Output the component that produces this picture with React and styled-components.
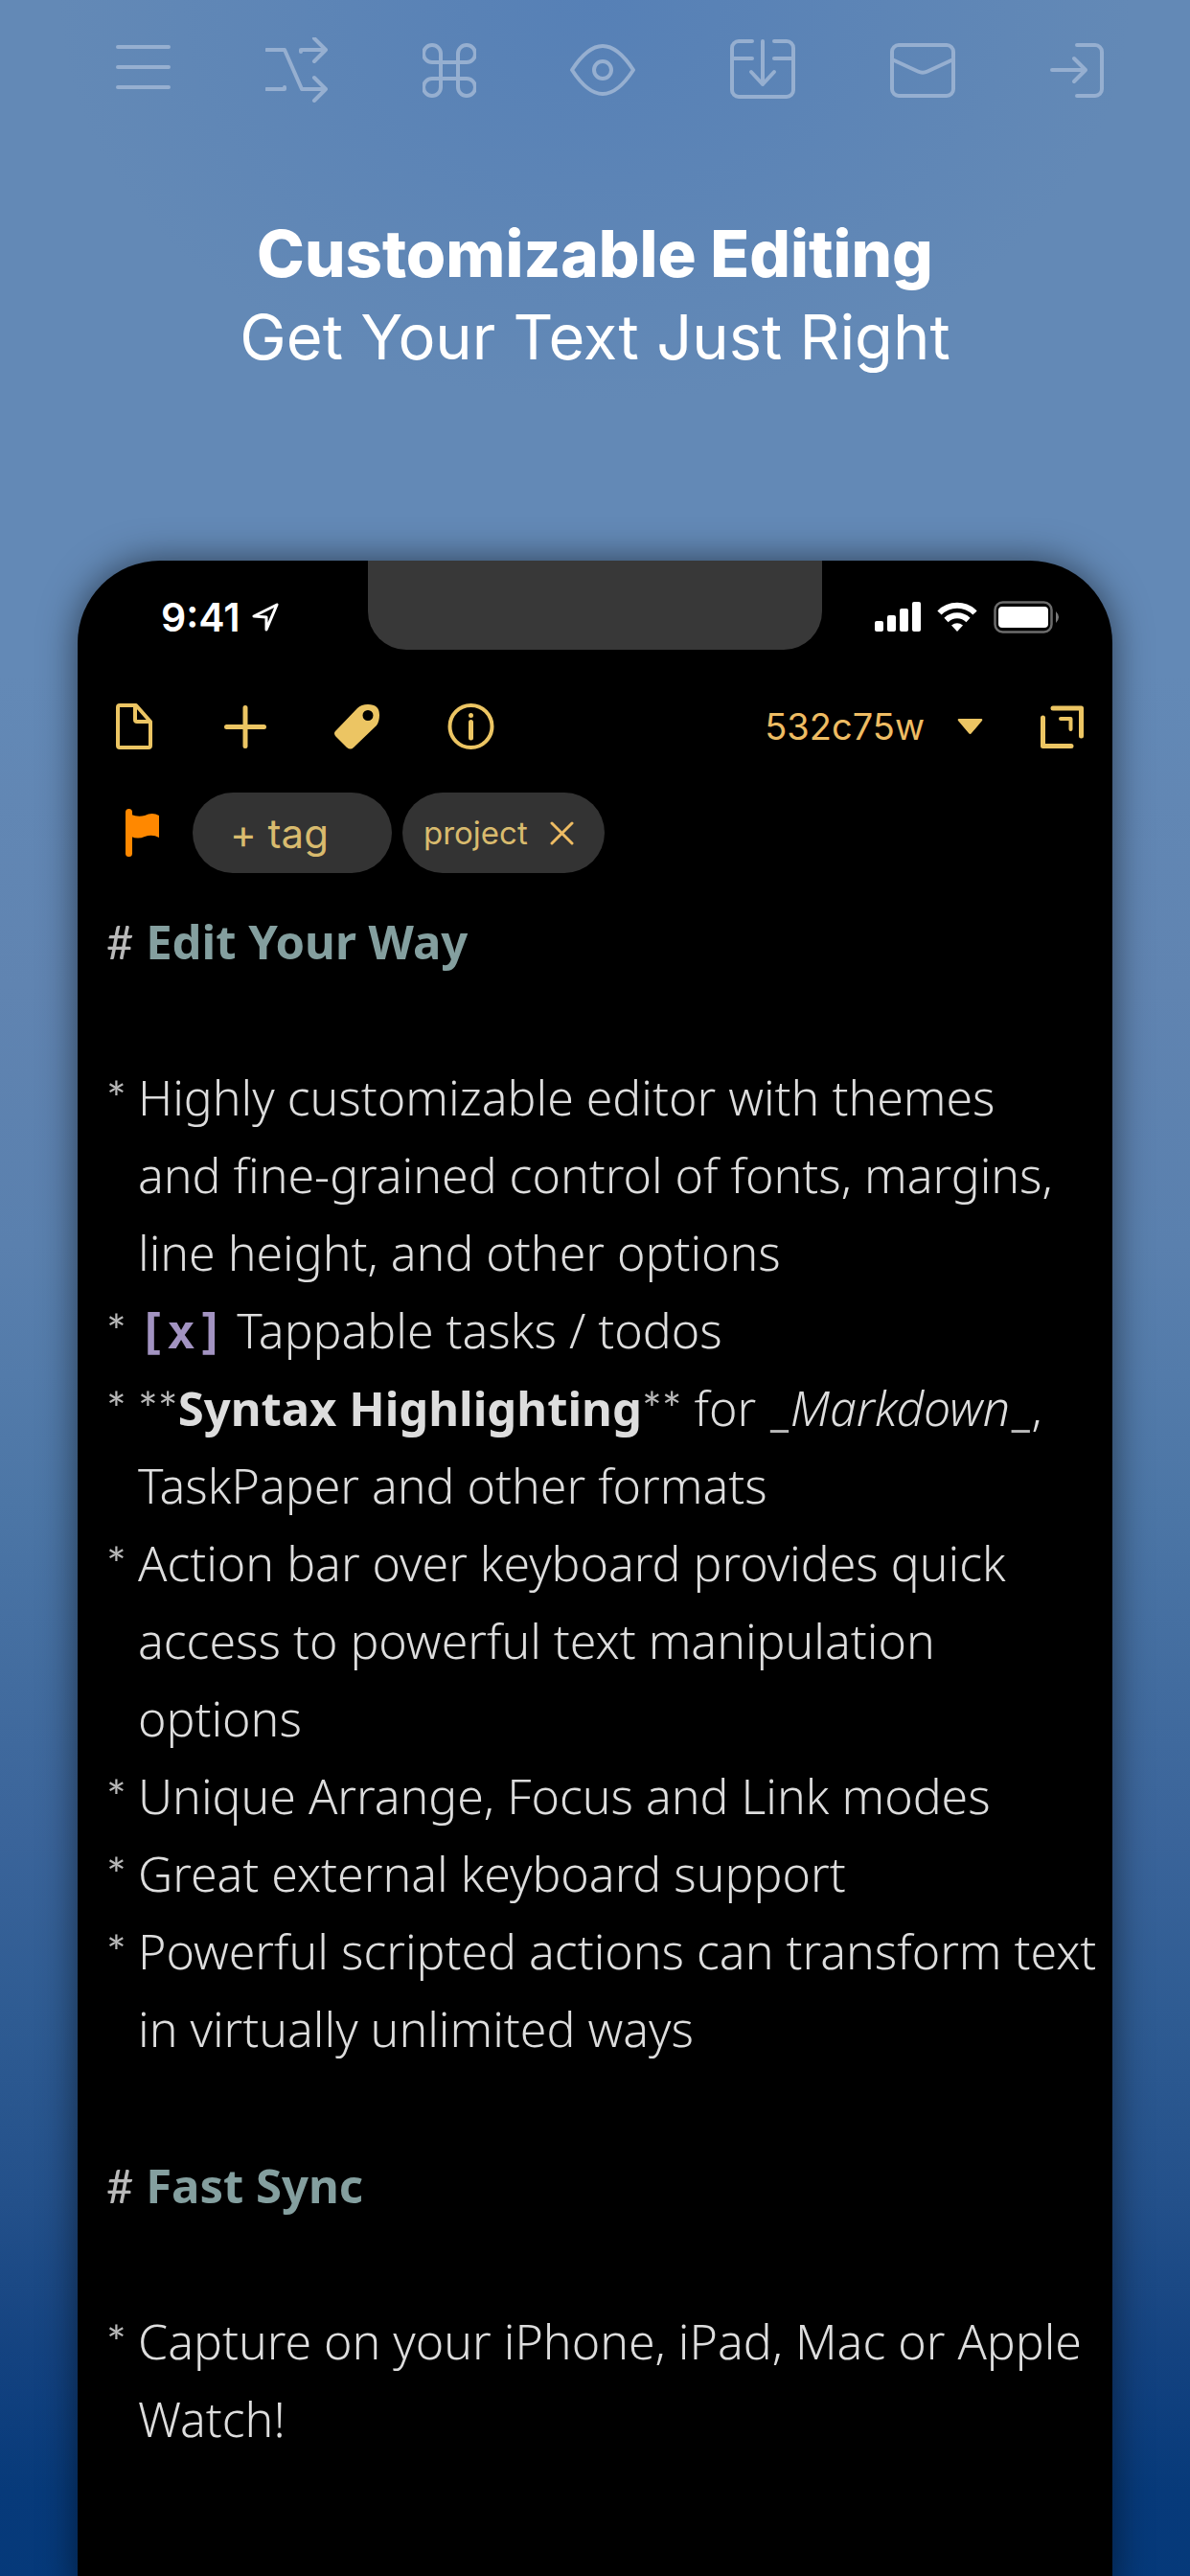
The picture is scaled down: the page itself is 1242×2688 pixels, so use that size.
import React from "react";
import styled, { createGlobalStyle } from "styled-components";

const GlobalStyle = createGlobalStyle`
  *, *::before, *::after { box-sizing: border-box; }
  body { margin: 0; background: #05397a; }
  button { margin: 0; padding: 0; border: 0; background: none; color: inherit; font: inherit; cursor: pointer; }
  svg { display: block; flex: none; }
`;

const Page = styled.main`
  display: flex;
  flex-direction: column;
  min-height: 100vh;
  overflow: hidden;
  font-family: Inter, "Liberation Sans", sans-serif;
  background:
    radial-gradient(ellipse 560px 420px at 50% 0, #5680b6 0%, rgba(86, 128, 182, 0) 100%),
    linear-gradient(
      180deg,
      #6389b6 0%,
      #6389b6 26%,
      #6084b1 38%,
      #5a80ae 48%,
      #4c76a6 58%,
      #426c9f 65%,
      #3a649a 71%,
      #2e5b92 78%,
      #23508a 85%,
      #134280 91%,
      #073a7a 96%,
      #05397a 100%
    );
`;

const FeatureBar = styled.nav`
  display: flex;
  justify-content: space-between;
  padding: 39px 90px 0 121px;
`;

const FeatureButton = styled.button`
  svg {
    fill: none;
    stroke: #96afd0;
    stroke-width: 4;
    stroke-linecap: round;
    stroke-linejoin: round;
  }
`;

const Headline = styled.header`
  margin: 114px 0 190px;
  color: #fff;
  text-align: center;
  line-height: 87px;
`;

const Title = styled.h1`
  margin: 0;
  font-size: 67px;
  font-weight: 800;
`;

const Subtitle = styled.p`
  margin: 0;
  font-size: 65px;
  font-weight: 400;
`;

const Phone = styled.section`
  flex: 1;
  margin: 0 81px;
  border-radius: 86px 86px 0 0;
  background: #000;
  box-shadow: 0 0 38px rgba(0, 0, 0, 0.55);
`;

const StatusBar = styled.div`
  display: grid;
  grid-template-columns: 1fr 474px 1fr;
  height: 93px;
  color: #fff;
`;

const StatusLeft = styled.div`
  display: flex;
  align-items: center;
  gap: 12px;
  padding: 25px 0 0 87px;
`;

const Time = styled.time`
  font-size: 41px;
  line-height: 48px;
  font-weight: 600;
`;

const Notch = styled.div`
  border-radius: 0 0 40px 40px;
  background: #383838;
`;

const StatusRight = styled.div`
  display: flex;
  align-items: center;
  justify-content: flex-end;
  gap: 17px;
  padding: 25px 55px 0 0;
`;

const Toolbar = styled.div`
  display: flex;
  align-items: center;
  justify-content: space-between;
  margin-top: 56px;
  padding: 0 30px 0 40px;
  color: #ecc563;
`;

const ToolGroup = styled.div`
  display: flex;
  align-items: center;
  gap: ${(p) => p.$gap}px;
`;

const WorkspaceButton = styled.button`
  display: flex;
  align-items: center;
  gap: 34px;
  font-size: 38px;
  line-height: 48px;
  color: #eebc63;
`;

const TagRow = styled.div`
  display: flex;
  align-items: center;
  margin-top: 45px;
  padding-left: 50px;
  color: #d9bb6e;
`;

const TagInput = styled.input`
  width: 208px;
  height: 84px;
  margin-left: 34px;
  padding: 0 39px;
  border: 0;
  border-radius: 42px;
  outline: 0;
  background: #333;
  color: inherit;
  font: 400 42px Inter, "Liberation Sans", sans-serif;

  &::placeholder {
    color: #d9bb6e;
    opacity: 1;
  }
`;

const TagChip = styled.span`
  display: flex;
  align-items: center;
  gap: 23px;
  height: 84px;
  margin-left: 11px;
  padding: 0 32px 0 22px;
  border-radius: 42px;
  background: #333;
  font-size: 33px;
`;

const Editor = styled.article`
  margin-top: 31px;
  padding: 0 0 60px 30px;
  color: #ddd;
  font-family: "Noto Sans", sans-serif;
  font-size: 50px;
  font-weight: 350;
  line-height: 81px;
  font-variant-ligatures: none;
  white-space: nowrap;
`;

const Heading = styled.h2`
  margin: 0 0 82px;
  color: #849f9f;
  font-size: 49px;
  font-weight: 700;
`;

const Syntax = styled.span`
  color: #b9b9b9;
  font: 400 49px/1 Lato, sans-serif;
`;

const List = styled.ul`
  margin: 0 0 82px;
  padding: 0;
  list-style: none;
`;

const Item = styled.li`
  display: flex;
  align-items: baseline;
`;

const Bullet = styled(Syntax)`
  flex: none;
  width: 33px;
`;

const Strong = styled.strong`
  font-size: 49px;
  font-weight: 700;
  line-height: 1;
`;

const Task = styled.span`
  color: #a293c1;
  font: 700 50px/1 "DejaVu Sans Mono", monospace;
`;

const features = [
  { label: "Menu", width: 57, art: <path d="M2 10h53M2 31h53M2 52h53" /> },
  {
    label: "Arrange",
    width: 65,
    art: <path d="M1 13H20L38 54H63M37 15V13H63M1 54H20V52M51 1L63 13L51 25M51 42L63 54L51 66" />,
  },
  {
    label: "Shortcuts",
    width: 56,
    art: <path d="M37 17V52a9 9 0 1 0 9-9H10a9 9 0 1 0 9 9V17a9 9 0 1 0-9 9H46a9 9 0 1 0-9-9" />,
  },
  {
    label: "Preview",
    width: 68,
    art: (
      <>
        <path d="M2 34C13 17 24 9 34 9S55 17 66 34C55 51 44 59 34 59S13 51 2 34Z" />
        <circle cx="34" cy="34" r="9" />
      </>
    ),
  },
  {
    label: "Import",
    width: 68,
    art: (
      <path d="M23 4H9a7 7 0 0 0-7 7V55a7 7 0 0 0 7 7H59a7 7 0 0 0 7-7V11a7 7 0 0 0-7-7H46M2 22H23M46 22H66M34 4V49M22 36L34 49L46 36" />
    ),
  },
  {
    label: "Mail",
    width: 68,
    art: (
      <>
        <rect x="2" y="8" width="64" height="53" rx="7" />
        <path d="M2 23L29 35.500Q34 38 39 35.500L66 23" />
      </>
    ),
  },
  {
    label: "Share",
    width: 56,
    art: <path d="M2 34H37M25 22L37 34L25 46M28 8H47a7 7 0 0 1 7 7V54a7 7 0 0 1-7 7H28" />,
  },
];

const LocationIcon = () => (
  <svg width="28" height="31" viewBox="0 0 28 31" fill="none" stroke="#fff" strokeWidth="3" strokeLinejoin="round">
    <path d="M26 2L2 14L15 15L15 28Z" />
  </svg>
);

const SignalIcon = () => (
  <svg width="48" height="32" viewBox="0 0 48 32" fill="#fff">
    <rect x="0" y="20" width="9" height="11" rx="2" />
    <rect x="13" y="14" width="9" height="17" rx="2" />
    <rect x="26" y="7" width="9" height="24" rx="2" />
    <rect x="39" y="0" width="9" height="31" rx="2" />
  </svg>
);

const WifiIcon = () => (
  <svg width="42" height="32" viewBox="0 0 42 32" fill="none" stroke="#fff" strokeWidth="6">
    <path d="M2.500 11.500A26 26 0 0 1 39.500 11.500" />
    <path d="M9.500 19A16.500 16.500 0 0 1 32.500 19" />
    <path d="M21 31L15 24.500Q21 20 27 24.500Z" fill="#fff" stroke="none" />
  </svg>
);

const BatteryIcon = () => (
  <svg width="69" height="34" viewBox="0 0 69 34">
    <rect x="1.500" y="1.500" width="59" height="31" rx="8" fill="none" stroke="#6c6c6c" strokeWidth="2.500" />
    <rect x="5" y="6" width="52" height="22" rx="4" fill="#fff" />
    <path d="M65 11Q71 17 65 23Z" fill="#7a7a7a" />
  </svg>
);

const DocumentIcon = () => (
  <svg width="42" height="48" viewBox="0 0 42 48" fill="none" stroke="currentColor" strokeWidth="4" strokeLinejoin="round">
    <path d="M4 2H21L36 19V44Q36 46 34 46H4Q2 46 2 44V4Q2 2 4 2Z" />
    <path d="M20 3V17Q20 19 22 19H35" />
  </svg>
);

const PlusIcon = () => (
  <svg width="44" height="48" viewBox="0 0 44 48" stroke="currentColor" strokeWidth="5" strokeLinecap="round">
    <path d="M22 4.500V44.500M2.500 24.500H41.500" />
  </svg>
);

const LabelIcon = () => (
  <svg width="47" height="48" viewBox="0 0 47 48" fill="currentColor" fillRule="evenodd">
    <path d="M24 5Q28 1 35 1Q47 1 47 12Q47 19 44 23L20 46Q17 49 13 46L1 34Q-1 31 1 29ZM35 7A5.500 5.500 0 1 0 35 18A5.500 5.500 0 1 0 35 7Z" />
  </svg>
);

const InfoIcon = () => (
  <svg width="49" height="48" viewBox="0 0 49 48" fill="none" stroke="currentColor" strokeLinecap="round">
    <circle cx="24.500" cy="24" r="22" strokeWidth="4" />
    <path d="M24.500 19.500V36" strokeWidth="5" />
    <circle cx="24.500" cy="12.500" r="2.500" fill="currentColor" stroke="none" />
  </svg>
);

const CaretIcon = () => (
  <svg width="27" height="16" viewBox="0 0 27 16" fill="#ecc563">
    <path d="M2 0H25Q27 0 26 2L15 15Q13.500 17 12 15L1 2Q0 0 2 0Z" />
  </svg>
);

const ExpandIcon = () => (
  <svg width="45" height="48" viewBox="0 0 45 48" fill="none" stroke="currentColor" strokeLinecap="round" strokeLinejoin="round">
    <path d="M13 5H42.500V34M2.500 15V44.500H32" strokeWidth="5" />
    <path d="M21 16H31.500V27" strokeWidth="4" />
  </svg>
);

const FlagIcon = () => (
  <svg width="36" height="50" viewBox="0 0 36 50" fill="#ff8800">
    <rect x="0" y="0" width="7" height="50" rx="3.500" />
    <path d="M6 6Q13 9 20 7Q28 3 35 7V30Q28 26 20 29Q13 32 6 29Z" />
  </svg>
);

const CloseIcon = () => (
  <svg width="25" height="25" viewBox="0 0 25 25" stroke="#eebc63" strokeWidth="3" strokeLinecap="round">
    <path d="M2 2L23 23M23 2L2 23" />
  </svg>
);

const Bulleted = ({ children }) => (
  <Item>
    <Bullet>*</Bullet>
    <div>{children}</div>
  </Item>
);

export default function App() {
  return (
    <Page>
      <GlobalStyle />
      <FeatureBar aria-label="Features">
        {features.map(({ label, width, art }) => (
          <FeatureButton key={label} type="button" aria-label={label}>
            <svg width={width} height="68" viewBox={`0 0 ${width} 68`}>
              {art}
            </svg>
          </FeatureButton>
        ))}
      </FeatureBar>

      <Headline>
        <Title>Customizable Editing</Title>
        <Subtitle>Get Your Text Just Right</Subtitle>
      </Headline>

      <Phone>
        <StatusBar>
          <StatusLeft>
            <Time>9:41</Time>
            <LocationIcon />
          </StatusLeft>
          <Notch />
          <StatusRight>
            <SignalIcon />
            <WifiIcon />
            <BatteryIcon />
          </StatusRight>
        </StatusBar>

        <Toolbar>
          <ToolGroup $gap={71}>
            <button type="button" aria-label="Drafts"><DocumentIcon /></button>
            <button type="button" aria-label="New draft"><PlusIcon /></button>
            <button type="button" aria-label="Tags"><LabelIcon /></button>
            <button type="button" aria-label="Information"><InfoIcon /></button>
          </ToolGroup>
          <ToolGroup $gap={60}>
            <WorkspaceButton type="button">
              532c75w
              <CaretIcon />
            </WorkspaceButton>
            <button type="button" aria-label="Expand"><ExpandIcon /></button>
          </ToolGroup>
        </Toolbar>

        <TagRow>
          <button type="button" aria-label="Flag"><FlagIcon /></button>
          <TagInput type="text" placeholder="+ tag" aria-label="Add tag" />
          <TagChip>
            project
            <button type="button" aria-label="Remove project"><CloseIcon /></button>
          </TagChip>
        </TagRow>

        <Editor>
          <Heading><Syntax>#</Syntax> Edit Your Way</Heading>
          <List>
            <Bulleted>
              Highly customizable editor with themes<br />
              and fine-grained control of fonts, margins,<br />
              line height, and other options
            </Bulleted>
            <Bulleted><Task>[x]</Task> Tappable tasks / todos</Bulleted>
            <Bulleted>
              <Syntax>**</Syntax><Strong>Syntax Highlighting</Strong><Syntax>**</Syntax> for{" "}
              <Syntax>_</Syntax><em>Markdown</em><Syntax>_</Syntax>,<br />
              TaskPaper and other formats
            </Bulleted>
            <Bulleted>
              Action bar over keyboard provides quick<br />
              access to powerful text manipulation<br />
              options
            </Bulleted>
            <Bulleted>Unique Arrange, Focus and Link modes</Bulleted>
            <Bulleted>Great external keyboard support</Bulleted>
            <Bulleted>
              Powerful scripted actions can transform text<br />
              in virtually unlimited ways
            </Bulleted>
          </List>
          <Heading><Syntax>#</Syntax> Fast Sync</Heading>
          <List>
            <Bulleted>
              Capture on your iPhone, iPad, Mac or Apple<br />
              Watch!
            </Bulleted>
          </List>
        </Editor>
      </Phone>
    </Page>
  );
}
